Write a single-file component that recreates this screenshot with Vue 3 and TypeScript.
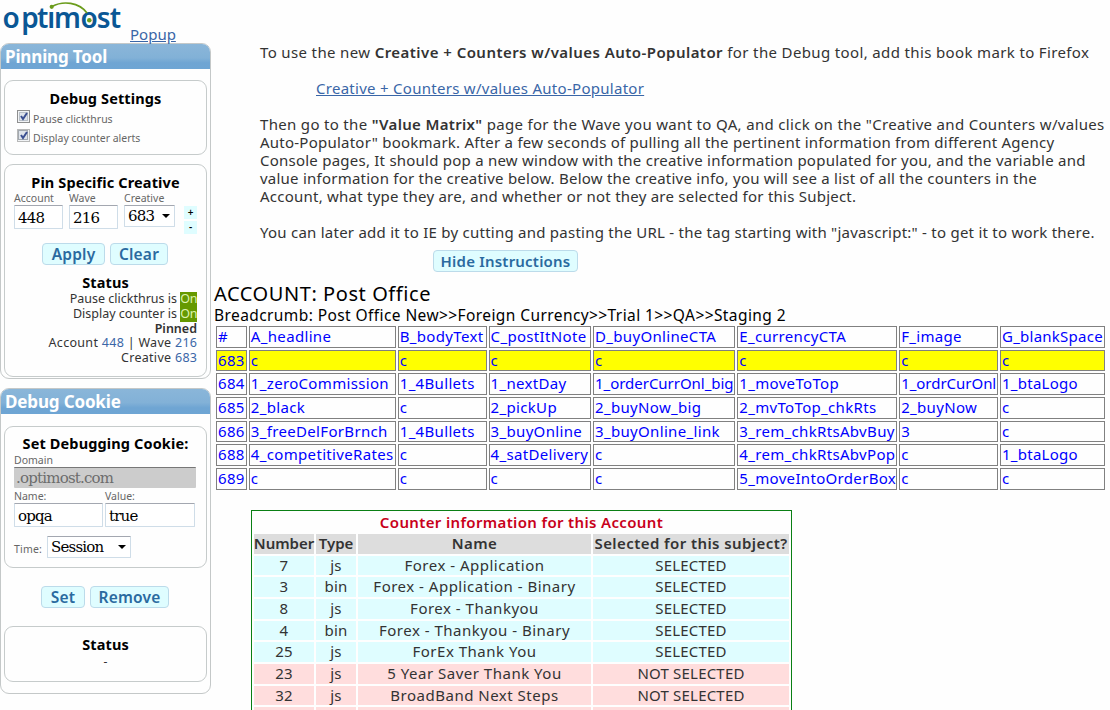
<script setup lang="ts">
const headers: string[] = ['#', 'A_headline', 'B_bodyText', 'C_postItNote', 'D_buyOnlineCTA', 'E_currencyCTA', 'F_image', 'G_blankSpace']
const rows: string[][] = [
  ['683', 'c', 'c', 'c', 'c', 'c', 'c', 'c'],
  ['684', '1_zeroCommission', '1_4Bullets', '1_nextDay', '1_orderCurrOnl_big', '1_moveToTop', '1_ordrCurOnl', '1_btaLogo'],
  ['685', '2_black', 'c', '2_pickUp', '2_buyNow_big', '2_mvToTop_chkRts', '2_buyNow', 'c'],
  ['686', '3_freeDelForBrnch', '1_4Bullets', '3_buyOnline', '3_buyOnline_link', '3_rem_chkRtsAbvBuy', '3', 'c'],
  ['688', '4_competitiveRates', 'c', '4_satDelivery', 'c', '4_rem_chkRtsAbvPop', 'c', '1_btaLogo'],
  ['689', 'c', 'c', 'c', 'c', '5_moveIntoOrderBox', 'c', 'c'],
]
interface Counter { num: string; type: string; name: string; selected: boolean }
const counters: Counter[] = [
  { num: '7', type: 'js', name: 'Forex - Application', selected: true },
  { num: '3', type: 'bin', name: 'Forex - Application - Binary', selected: true },
  { num: '8', type: 'js', name: 'Forex - Thankyou', selected: true },
  { num: '4', type: 'bin', name: 'Forex - Thankyou - Binary', selected: true },
  { num: '25', type: 'js', name: 'ForEx Thank You', selected: true },
  { num: '23', type: 'js', name: '5 Year Saver Thank You', selected: false },
  { num: '32', type: 'js', name: 'BroadBand Next Steps', selected: false },
  { num: '', type: '', name: '', selected: false },
]
const currentId = '683'
</script>

<template>
  <div class="page">
    <aside class="side">
      <div class="brand">
        <svg class="logo" width="126" height="43" viewBox="0 0 126 43">
          <text x="2.6 21.2 37 47.3 54 80.6 96.8 109.8" y="27.5" class="logo-text">optimost</text>
          <rect x="47" y="1" width="8" height="10.5" fill="#fefefe" />
          <path d="M52 6.5C63 .5 79 2 87 13" fill="none" stroke="#6b9c1c" stroke-width="1.6" />
          <circle cx="51.7" cy="6.8" r="2.1" fill="#6b9c1c" />
          <circle cx="89.3" cy="20.3" r="2.3" fill="#6b9c1c" />
        </svg>
        <a class="popup">Popup</a>
      </div>

      <section class="panel pinning">
        <h2>Pinning Tool</h2>
        <div class="box settings">
          <h3>Debug Settings</h3>
          <div class="check">
            <svg width="13" height="13" viewBox="0 0 13 13"><rect x=".5" y=".5" width="12" height="12" fill="#f1f3f5" stroke="#8e8f8f" /><rect x="2.5" y="2.5" width="8" height="8" fill="#dfe4ea" stroke="#b9c0c8" /><path d="M4 6l2 3 4-6" fill="none" stroke="#3a4f91" stroke-width="2" /></svg>
            <span>Pause clickthrus</span>
          </div>
          <div class="check">
            <svg width="13" height="13" viewBox="0 0 13 13"><rect x=".5" y=".5" width="12" height="12" fill="#f1f3f5" stroke="#777" stroke-dasharray="1 1" /><rect x="1.5" y="1.5" width="9" height="9" fill="#dfe4ea" stroke="#a3a9b0" /><path d="M4 6l2 3 4-6" fill="none" stroke="#3a4f91" stroke-width="2" /></svg>
            <span>Display counter alerts</span>
          </div>
        </div>
        <div class="box pin">
          <h3>Pin Specific Creative</h3>
          <div class="fields">
            <label>Account<span class="input">448</span></label>
            <label>Wave<span class="input">216</span></label>
            <label class="wide">Creative<span class="input select">683<i class="arrow"></i></span></label>
            <div class="steps"><b>+</b><b>-</b></div>
          </div>
          <div class="buttons"><span class="btn apply">Apply</span><span class="btn clear">Clear</span></div>
          <h3 class="status">Status</h3>
          <div class="lines">
            <div>Pause clickthrus is <em>On</em></div>
            <div>Display counter is <em>On</em></div>
            <div><strong>Pinned</strong></div>
            <div class="ids">Account <u>448</u> | Wave <u>216</u></div>
            <div class="ids">Creative <u>683</u></div>
          </div>
        </div>
      </section>

      <section class="panel cookie">
        <h2>Debug Cookie</h2>
        <div class="box set">
          <h3>Set Debugging Cookie:</h3>
          <label>Domain<span class="input disabled">.optimost.com</span></label>
          <div class="pair">
            <label>Name:<span class="input">opqa</span></label>
            <label>Value:<span class="input">true</span></label>
          </div>
          <div class="time"><span>Time:</span><span class="input select">Session<i class="arrow"></i></span></div>
        </div>
        <div class="buttons"><span class="btn setb">Set</span><span class="btn remove">Remove</span></div>
        <div class="box state"><h3>Status</h3><div class="dash">-</div></div>
      </section>
    </aside>

    <main class="main">
      <div class="intro">
        <p><span class="l1">To use the new <b>Creative + Counters w/values Auto-Populator</b> for the Debug tool, add this book mark to Firefox</span></p>
        <p class="bookmark"><a>Creative + Counters w/values Auto-Populator</a></p>
        <p>
          <span class="l2">Then go to the <b>"Value Matrix"</b> page for the Wave you want to QA, and click on the "Creative and Counters w/values</span><br>
          <span>Auto-Populator" bookmark. After a few seconds of pulling all the pertinent information from different Agency</span><br>
          <span>Console pages, It should pop a new window with the creative information populated for you, and the variable and</span><br>
          <span>value information for the creative below. Below the creative info, you will see a list of all the counters in the</span><br>
          <span>Account, what type they are, and whether or not they are selected for this Subject.</span>
        </p>
        <p><span class="l7">You can later add it to IE by cutting and pasting the URL - the tag starting with "javascript:" - to get it to work there.</span></p>
      </div>
      <div class="hide"><span class="btn">Hide Instructions</span></div>
      <h1>ACCOUNT: Post Office</h1>
      <div class="crumb">Breadcrumb: Post Office New&gt;&gt;Foreign Currency&gt;&gt;Trial 1&gt;&gt;QA&gt;&gt;Staging 2</div>

      <div class="matrix">
        <div v-for="h in headers" :key="h" class="cell">{{ h }}</div>
        <template v-for="r in rows" :key="r[0]">
          <div v-for="(c, i) in r" :key="i" class="cell" :class="{ current: r[0] === currentId, tight: c.startsWith('1_or') }">{{ c }}</div>
        </template>
      </div>

      <div class="counters">
        <div class="title">Counter information for this Account</div>
        <div class="grid">
          <div class="th num">Number</div><div class="th num">Type</div><div class="th">Name</div><div class="th">Selected for this subject?</div>
          <template v-for="c in counters" :key="c.num">
            <div :class="c.selected ? 'yes' : 'no'">{{ c.num }}</div>
            <div :class="c.selected ? 'yes' : 'no'">{{ c.type }}</div>
            <div class="name" :class="c.selected ? 'yes' : 'no'">{{ c.name }}</div>
            <div :class="c.selected ? 'yes' : 'no'">{{ c.num ? (c.selected ? 'SELECTED' : 'NOT SELECTED') : '' }}</div>
          </template>
        </div>
      </div>
    </main>
  </div>
</template>

<style>
html, body { background: #fefefe; overflow: hidden; }
</style>

<style scoped>
.page { display: flex; width: 1110px; height: 710px; overflow: hidden; background: #fefefe; font-family: "Noto Sans", "Open Sans", sans-serif; font-size: 15px; color: #333; }
.page * { box-sizing: border-box; }
h1, h2, h3, p { margin: 0; }
b, strong { font-weight: 600; }
.side { width: 214px; flex: none; }
.brand { display: flex; height: 43px; }
.logo { display: block; flex: none; overflow: visible; }
.logo-text { font-family: "Noto Sans", sans-serif; font-weight: 600; font-size: 28px; fill: #0a5795; }
.popup { margin: 25px 0 0 4px; line-height: 18px; height: 18px; color: #3a66a7; text-decoration: underline; }
.panel { width: 211px; border: 1px solid #c4c8c8; border-radius: 9px; padding: 0 3px; }
.pinning { height: 336px; }
.cookie { height: 306px; margin-top: 9px; }
h2 { margin: 0 -3px; height: 25px; line-height: 26px; border-radius: 8px 8px 0 0; padding-left: 4px; color: #fff; font-size: 17px; letter-spacing: -.15px; background: linear-gradient(#8ab6d9 0, #82b1d7 55%, #6fa5d3 75%, #6ea5d4 100%); }
.box { border: 1px solid #c6cbcb; border-radius: 9px; }
h3 { font-size: 14.5px; line-height: 16px; height: 18px; letter-spacing: .13px; text-align: center; color: #000; }
.settings { margin-top: 11px; height: 75px; padding: 9px 0 0 12px; }
.settings h3 { margin-left: -12px; margin-bottom: 1px; }
.check { display: flex; gap: 3px; height: 19px; align-items: flex-start; padding-top: 1px; font-size: 10.5px; line-height: 19px; color: #666; }
.pin { margin-top: 9px; height: 213px; padding-top: 9px; }
.fields { display: flex; gap: 6px; padding-left: 9px; height: 51px; }
label { display: block; width: 49px; font-size: 10.5px; line-height: 13px; color: #666; }
label.wide { width: 51px; }
.input { display: block; height: 24px; border: 1px solid #cfdde8; border-top-color: #a3a7b0; padding-left: 3px; font: 15px/24px "DejaVu Serif", serif; letter-spacing: -.8px; color: #000; background: #fff; border-radius: 1px; }
.select { display: flex; height: 22px; line-height: 22px; align-items: center; justify-content: space-between; padding-right: 4px; }
.arrow { border: 4px solid transparent; border-top-color: #000; border-bottom: 0; }
.steps { margin: 14px 0 0 3px; width: 13px; }
.steps b { display: block; height: 13px; margin-bottom: 2px; line-height: 12px; background: #dffdff; color: #000; text-align: center; font-size: 10px; }
.buttons { display: flex; gap: 5px; }
.btn { display: block; height: 22px; border: 1px solid #bcdbea; border-radius: 4px; background: #dffdff; color: #2a6a9f; font-weight: 600; font-size: 15.5px; letter-spacing: .2px; line-height: 20px; text-align: center; }
.pin .buttons { padding-left: 37px; }
.apply { width: 63px; } .clear { width: 58px; }
.status { margin-top: 9px; }
.lines { text-align: right; padding-right: 9px; font-size: 12.5px; line-height: 14.8px; }
.lines em { font-style: normal; color: #dff3b0; background: #690; display: inline-block; letter-spacing: -.4px; }
.lines u { text-decoration: none; color: #3a66a7; }
.ids { letter-spacing: .3px; margin-right: -.3px; }
.set { margin-top: 12px; height: 142px; padding: 8px 9px 0; }
.set label { width: 182px; }
.set h3 { height: 19px; }
.set .input { line-height: 25px; }
.set .disabled { height: 21px; line-height: 21px; background: #ccc; border: 0; border-top: 1px solid #777; color: #6c6c6c; padding-left: 2px; }
.pair { display: flex; gap: 2px; margin-top: 2px; }
.set .pair label { width: 90px; }
.set .pair label:first-child { width: 89px; }
.time { display: flex; gap: 5px; margin-top: 9px; font-size: 10.5px; line-height: 26px; letter-spacing: .2px; color: #666; }
.time > span:first-child { width: 28px; }
.time .select { width: 84px; line-height: 22px; }
.cookie .buttons { padding-left: 37px; margin-top: 18px; }
.setb { width: 44px; } .remove { width: 79px; }
.state { margin-top: 18px; height: 56px; padding-top: 9px; }
.dash { text-align: center; font-size: 12px; line-height: 16px; }

.main { width: 896px; flex: none; padding-top: 43px; }
.intro { margin-left: 46px; line-height: 18px; white-space: nowrap; letter-spacing: .235px; }
.intro p { margin-bottom: 18px; }
.intro .bookmark { padding-left: 56px; }
.bookmark a { color: #3a66a7; text-decoration: underline; letter-spacing: .28px; }
.l1 { letter-spacing: .36px; }
.l1 b { letter-spacing: .45px; }
.l2 { letter-spacing: .32px; }
.l7 { letter-spacing: .245px; }
.hide { margin: -9px 0 0 219px; height: 22px; }
.hide .btn { width: 145px; font-size: 15px; }
h1 { margin-top: 9px; font-weight: 400; font-size: 20px; letter-spacing: .57px; line-height: 25px; color: #000; }
.crumb { font-size: 15.5px; letter-spacing: .41px; line-height: 18px; color: #000; white-space: nowrap; }
.matrix { display: grid; margin: 2px 0 0 2px; grid-template-columns: 31px 147px 89px 102.6px 142.4px 160px 99px 105px; column-gap: 1.86px; grid-template-rows: repeat(7, 21.67px); row-gap: 2px; letter-spacing: .33px; }
.cell { border: 1px solid #808080; padding-left: 1px; line-height: 19.4px; color: #00f; white-space: nowrap; }
.cell:nth-child(8n) { letter-spacing: .25px; }
.cell.tight { letter-spacing: -.03px; }
.current { background: #ff0; }
.counters { width: 541px; height: 240px; margin: 20px 0 0 37px; border: 1px solid #0a7f14; padding: 2px; }
.title { height: 21.6px; line-height: 18px; text-align: center; font-weight: 600; letter-spacing: .35px; color: #c8001a; }
.grid { display: grid; grid-template-columns: 60px 40px 233px 196px; gap: 2px; grid-auto-rows: 19.65px; line-height: 19.5px; text-align: center; white-space: nowrap; letter-spacing: .2px; }
.grid > div { display: flex; justify-content: center; }
.grid .name { letter-spacing: .5px; }
.th { background: #ddd; font-weight: 600; letter-spacing: .42px; }
.grid .num { letter-spacing: 0; }
.yes { background: #dffdff; }
.no { background: #fdd; }
</style>
